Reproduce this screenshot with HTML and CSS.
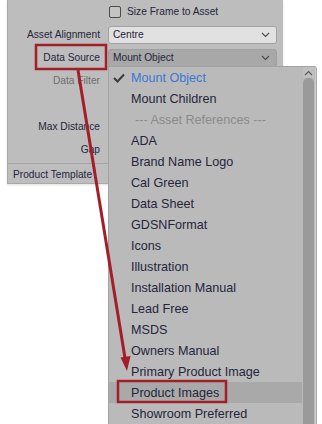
FILE: index.html
```html
<!DOCTYPE html>
<html lang="en">
<head>
    <meta charset="UTF-8">
    <meta name="viewport" content="width=device-width, initial-scale=1.0">
    <title>Data Source</title>
    <link rel="stylesheet" href="styles.css">
</head>
<body>
    <div class="stage">
        <div class="panel">
            <div class="row">
                <span></span>
                <label class="check"><span class="box"></span>Size Frame to Asset</label>
            </div>
            <div class="row">
                <span class="lbl">Asset Alignment</span>
                <div class="select">
                    <span>Centre</span>
                    <svg width="9" height="6" viewBox="0 0 9 6"><path d="M1 1 L4.5 4.5 L8 1" fill="none" stroke="#4a4a4a" stroke-width="1.1"/></svg>
                </div>
            </div>
            <div class="row">
                <span class="lbl">Data Source</span>
                <div class="select open">
                    <span>Mount Object</span>
                    <svg width="9" height="6" viewBox="0 0 9 6"><path d="M1 1 L4.5 4.5 L8 1" fill="none" stroke="#4a4a4a" stroke-width="1.1"/></svg>
                </div>
            </div>
            <div class="row"><span class="lbl dim">Data Filter</span></div>
            <div class="row"></div>
            <div class="row"><span class="lbl">Max Distance</span></div>
            <div class="row"><span class="lbl">Gap</span></div>
            <div class="section">Product Template</div>
        </div>

        <!-- open dropdown list -->
        <div class="menu">
            <ul class="items">
                <li class="current">
                    <svg class="tick" width="12" height="10" viewBox="0 0 12 10"><path d="M1 5 L4.5 8.5 L11 1.5" fill="none" stroke="#3c3c3c" stroke-width="2"/></svg>Mount Object
                </li>
                <li>Mount Children</li>
                <li class="group">--- Asset References ---</li>
                <li>ADA</li>
                <li>Brand Name Logo</li>
                <li>Cal Green</li>
                <li>Data Sheet</li>
                <li>GDSNFormat</li>
                <li>Icons</li>
                <li>Illustration</li>
                <li>Installation Manual</li>
                <li>Lead Free</li>
                <li>MSDS</li>
                <li>Owners Manual</li>
                <li>Primary Product Image</li>
                <li class="hover">Product Images</li>
                <li>Showroom Preferred</li>
            </ul>
            <div class="scrollbar">
                <div class="up">
                    <svg width="9" height="6" viewBox="0 0 9 6"><path d="M1 5 L4.5 1.5 L8 5" fill="none" stroke="#5a5a5a" stroke-width="1.1"/></svg>
                </div>
                <div class="thumb"></div>
            </div>
        </div>

        <!-- annotation layer -->
        <svg class="notes" width="322" height="424" viewBox="0 0 322 424">
            <rect x="36" y="45" width="70" height="24" fill="none" stroke="#a41e28" stroke-width="2.5"/>
            <rect x="118" y="381" width="108" height="21" fill="none" stroke="#a41e28" stroke-width="2.5"/>
            <line x1="78" y1="70" x2="125" y2="358" stroke="#a41e28" stroke-width="3"/>
            <polygon points="127,371 120.5,357.5 130.5,356" fill="#a41e28"/>
        </svg>
    </div>
</body>
</html>
```

FILE: styles.css
```css
body {
    margin: 0;
    background: #fff;
    font-family: "Liberation Sans", Arial, sans-serif;
    color: #25253c;
}
.stage {
    position: relative;
    width: 322px;
    height: 424px;
    overflow: hidden;
}
.panel {
    margin-left: 7px;
    width: 275px;
    height: 183px;
    background: #bdbdbd;
    border-left: 1px solid #a9a9a9;
    border-bottom: 1px solid #a9a9a9;
    box-shadow: 0 1px 2px rgba(0, 0, 0, 0.12);
    font-size: 10.2px;
}
.row {
    display: grid;
    grid-template-columns: 92px 169px;
    column-gap: 8px;
    align-items: center;
    height: 23px;
}
.lbl {
    text-align: right;
}
.lbl.dim {
    color: #6e6e6e;
}
.check {
    display: flex;
    align-items: center;
}
.box {
    width: 10px;
    height: 10px;
    margin-left: 1px;
    margin-right: 6px;
    border: 1px solid #4c4c4c;
    border-radius: 2px;
    background: #c4c4c4;
}
.select {
    display: flex;
    align-items: center;
    justify-content: space-between;
    height: 16px;
    padding: 0 6px 0 4px;
    background: #e1e1e1;
    border: 1px solid #a2a2a2;
    border-radius: 3px;
}
.select.open {
    background: #a8a8a8;
    border-color: #a0a0a0;
}
.section {
    margin-top: 2px;
    border-top: 1px solid #a6a6a6;
    padding: 2px 0 0 5px;
    line-height: 18px;
}
.menu {
    position: absolute;
    left: 108px;
    top: 66px;
    width: 206px;
    bottom: -4px;
    background: #bababa;
    border: 1px solid #a3a3a3;
    border-right-color: #cfcfcf;
    border-radius: 0 3px 0 0;
    box-shadow: 1px 0 0 #a9a9a9;
}
.items {
    list-style: none;
    margin: 0;
    padding: 0;
    font-size: 12.6px;
}
.items li {
    display: flex;
    align-items: center;
    height: 21px;
    padding-left: 22px;
    margin-right: 13px;
}
.items li.current {
    color: #3a78d4;
}
.tick {
    margin-left: -18px;
    margin-right: 6px;
}
.items li.group {
    padding-left: 26px;
    color: #8a8a8a;
}
.items li.hover {
    background: #a9a9a9;
}
.scrollbar {
    position: absolute;
    top: 0;
    right: 1px;
    bottom: 0;
    width: 11px;
    display: flex;
    flex-direction: column;
}
.up {
    height: 11px;
    display: flex;
    align-items: center;
    justify-content: center;
    background: #c0c0c0;
}
.thumb {
    flex: 1;
    background: #9a9a9a;
    border-radius: 5px 5px 0 0;
}
.notes {
    position: absolute;
    left: 0;
    top: 0;
    pointer-events: none;
}
```
